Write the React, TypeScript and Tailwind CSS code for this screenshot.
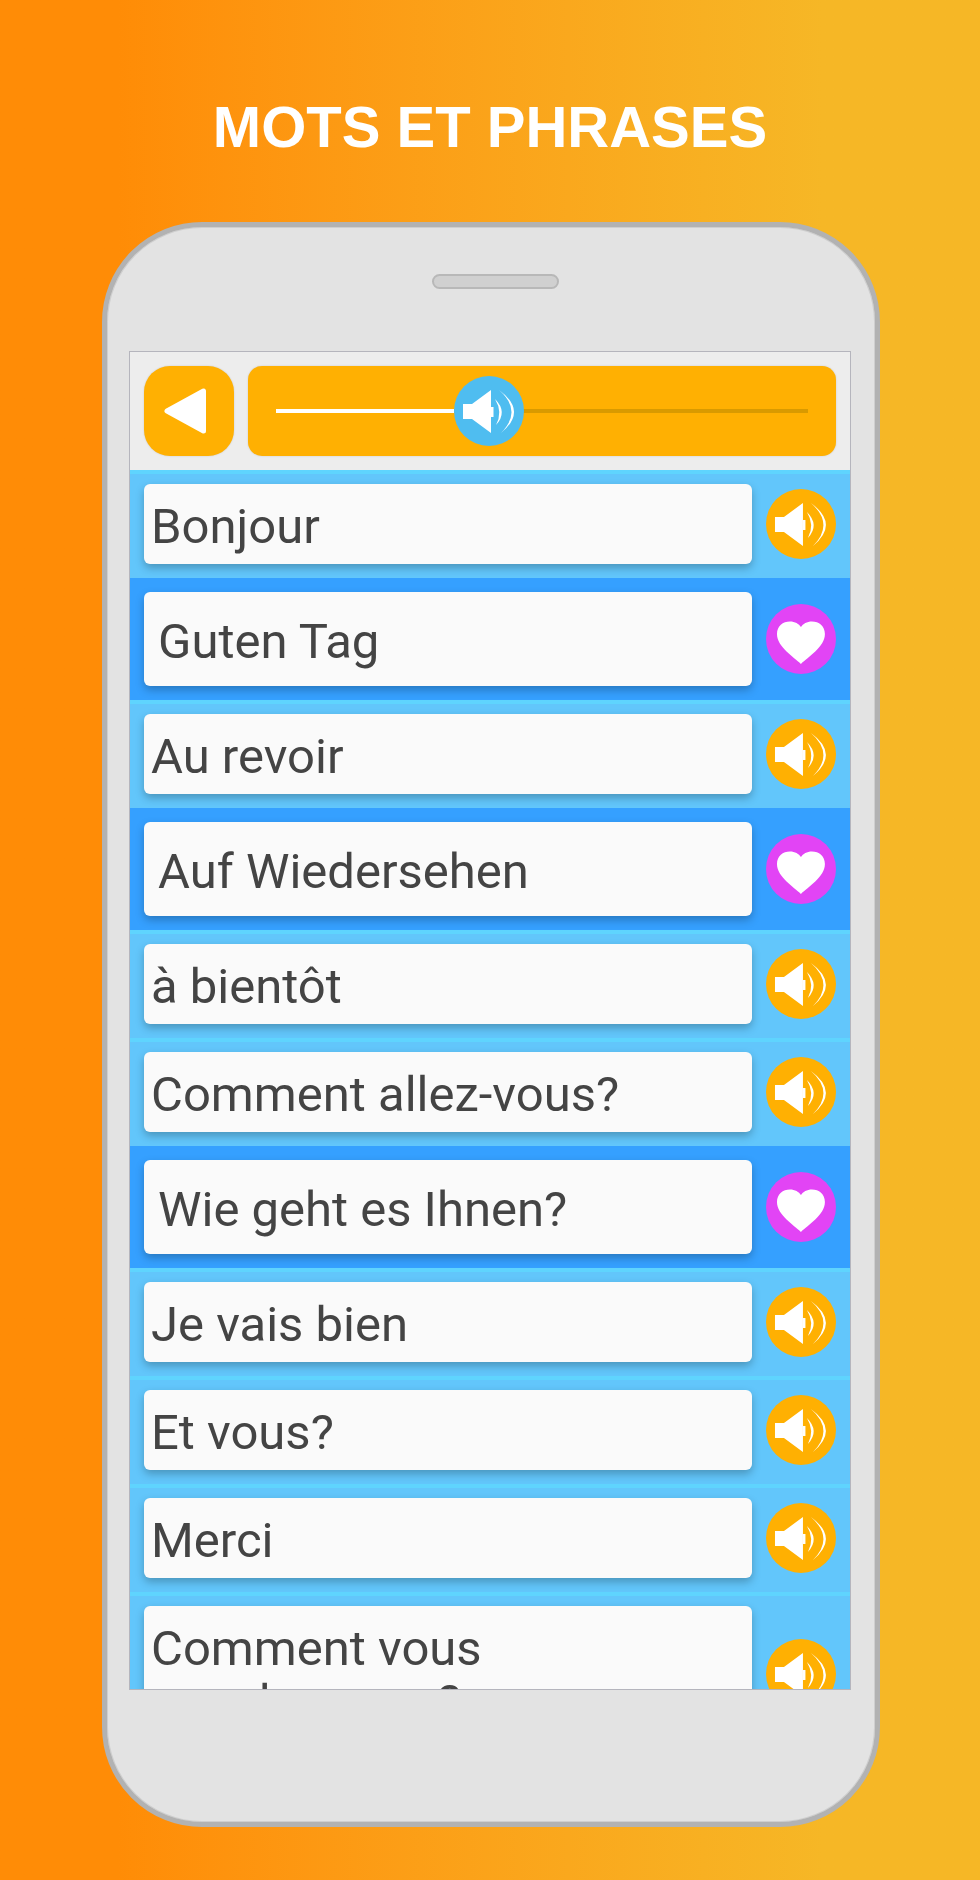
import React from 'react';

const Speaker = () => (
    <svg viewBox="0 0 70 70" className="w-full h-full">
        <path d="M9 28H18L37 14V57L18 43H9Z" fill="#fff" />
        <rect x="37" y="31" width="2.5" height="10" fill="#fff" />
        <path d="M45 14Q74 35 47 57Q69 35 45 14Z" fill="#fff" />
        <path d="M41 23Q54 36 42 49Q49 36 41 23Z" fill="#fff" />
    </svg>
);

const Heart = () => (
    <svg viewBox="0 0 70 70" className="w-full h-full">
        <path
            d="M35 60C28 53 11 43 11 30C11 22 17 17.500 24 17.500C29 17.500 33 20 35 23C37 20 41 17.500 46 17.500C53 17.500 59 22 59 30C59 43 42 53 35 60Z"
            fill="#fff"
        />
    </svg>
);

const Row = ({ text }: { text: string }) => (
    <div className="flex items-center border-t-4 border-[#5fd4fe] bg-[#62c6fb] pl-[14px] pr-[14px] pt-[10px] pb-[14px]">
        <div className="w-[609px] h-[80px] rounded-md bg-[#fafafa] pl-[7px] pt-[16px] text-[49px] leading-[54px] text-[#444] shadow-[0_4px_8px_rgba(0,0,0,0.25)]">
            {text}
        </div>
        <div className="ml-[14px] w-[70px] h-[70px] rounded-full bg-[#ffb002]">
            <Speaker />
        </div>
    </div>
);

const GermanRow = ({ text }: { text: string }) => (
    <div className="flex items-center bg-[#35a0ff] pl-[14px] pr-[14px] py-[14px]">
        <div className="w-[609px] h-[94px] rounded-md bg-[#fafafa] pl-[14px] pt-[23px] text-[49px] leading-[54px] text-[#444] shadow-[0_4px_8px_rgba(0,0,0,0.25)]">
            {text}
        </div>
        <div className="ml-[14px] w-[70px] h-[70px] rounded-full bg-[#e244f5]">
            <Heart />
        </div>
    </div>
);

const App = () => {
    return (
        <div className="w-[980px] h-[1880px] overflow-hidden bg-gradient-to-r from-[#ff8c06] from-[12%] to-[#f6b726] to-[84%] font-[Roboto,sans-serif]">
            <h1 className="pt-[93px] h-[222px] text-center font-['Liberation_Sans',sans-serif] text-[58px] leading-[68px] font-bold text-white">MOTS ET PHRASES</h1>

            <div className="ml-[102px] w-[778px] h-[1605px] rounded-[100px] border-[5px] border-[#b2b2b2] bg-[#e3e3e3] pt-[47px] shadow-[inset_0_0_0_1px_#cfcfcf]">
                <div className="ml-[325px] w-[127px] h-[15px] rounded-full border-2 border-[#b8b8b8] bg-[#d0d0d0]"></div>

                <div className="mt-[62px] ml-[22px] w-[722px] h-[1339px] overflow-hidden border border-[#b5b5bd]">
                    <div className="flex gap-[14px] h-[118px] bg-[#ededed] p-[14px]">
                        <div className="w-[90px] h-[90px] rounded-[26px] bg-[#ffb002] shadow-[0_0_2px_rgba(0,0,0,0.15)]">
                            <svg viewBox="0 0 90 90" className="w-full h-full">
                                <path d="M23 45L59.5 25V65Z" fill="#fff" stroke="#fff" strokeWidth="5" strokeLinejoin="round" />
                            </svg>
                        </div>
                        <div className="relative flex items-center w-[588px] h-[90px] rounded-[14px] bg-[#ffb002] px-[28px] shadow-[0_0_2px_rgba(0,0,0,0.15)]">
                            <div className="w-[178px] h-[4px] bg-white"></div>
                            <div className="flex-1 h-[4px] bg-[#d99a00]"></div>
                            <div className="absolute left-[206px] top-[10px] w-[70px] h-[70px] rounded-full bg-[#4fbdf0]">
                                <Speaker />
                            </div>
                        </div>
                    </div>

                    <Row text="Bonjour" />
                    <GermanRow text="Guten Tag" />
                    <Row text="Au revoir" />
                    <GermanRow text="Auf Wiedersehen" />
                    <Row text="à bientôt" />
                    <Row text="Comment allez-vous?" />
                    <GermanRow text="Wie geht es Ihnen?" />
                    <Row text="Je vais bien" />
                    <Row text="Et vous?" />
                    <Row text="Merci" />

                    <div className="flex items-center border-t-4 border-[#5fd4fe] bg-[#62c6fb] pl-[14px] pr-[14px] pt-[10px] pb-[14px]">
                        <div className="w-[609px] h-[136px] rounded-md bg-[#fafafa] pl-[7px] pt-[16px] text-[49px] leading-[54px] text-[#444] shadow-[0_4px_8px_rgba(0,0,0,0.25)]">
                            Comment vous
                            <br />
                            appelez-vous?
                        </div>
                        <div className="ml-[14px] w-[70px] h-[70px] rounded-full bg-[#ffb002]">
                            <Speaker />
                        </div>
                    </div>
                </div>
            </div>
        </div>
    );
};

export default App;
